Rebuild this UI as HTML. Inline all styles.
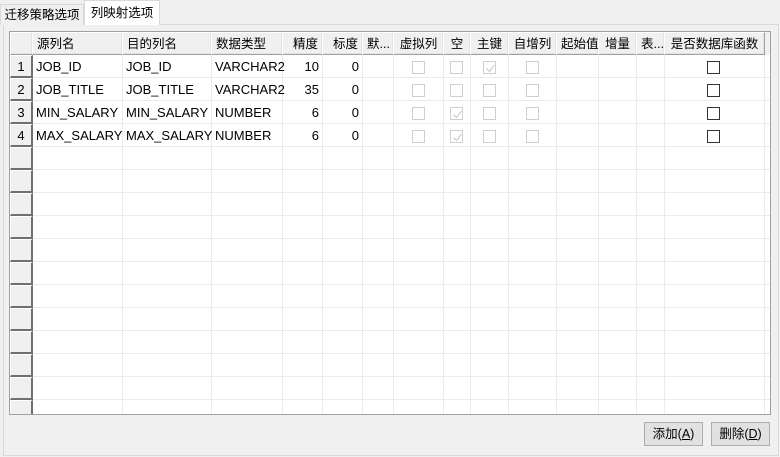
<!DOCTYPE html>
<html><head><meta charset="utf-8"><style>
*{margin:0;padding:0;box-sizing:border-box}
body{width:780px;height:457px;background:#f0f0f0;position:relative;overflow:hidden;font-family:"Liberation Sans","Noto Sans CJK SC",sans-serif;font-size:12.5px;color:#000}
.a{position:absolute}
.tab{position:absolute;font-size:12.5px;line-height:20px;text-align:center}
.panel{left:3px;top:24px;width:776px;height:432px;border:1px solid #d9d9d9;background:#f0f0f0}
.grid{left:9px;top:31px;width:762px;height:384px;border:1px solid #a0a0a0;background:#fff;overflow:hidden}
.hc{position:absolute;top:0;height:23px;background:#f0f0f0;border-top:1px solid #fff;border-left:1px solid #fff;border-right:1px solid #a0a0a0;border-bottom:1px solid #a0a0a0;box-shadow:inset -1px -1px 0 #e3e3e3;line-height:22px;padding-left:4px;white-space:nowrap;overflow:hidden}
.rh{position:absolute;left:0;width:23px;height:23px;background:#f0f0f0;border-top:1px solid #fff;border-left:1px solid #fff;border-right:2px solid #707070;border-bottom:2px solid #707070;text-align:center;line-height:22px;font-size:13px}
.vl{position:absolute;top:23px;bottom:0;width:1px;background:#ebebeb}
.t{position:absolute;line-height:24px;white-space:nowrap;font-size:13px}
.cb{position:absolute;width:13px;height:13px;border:1px solid #cfcfcf;background:#fff}
.cb.k{border-color:#333}
.cb svg{position:absolute;left:1px;top:1px}
.btn{position:absolute;top:422px;width:59px;height:24px;border:1px solid #adadad;background:#e1e1e1;text-align:center;line-height:22px;font-size:12.5px}
</style></head><body>
<div class="a panel"></div>
<div class="tab" style="left:0;top:4px;width:84px;height:21px;border:1px solid #d9d9d9;border-bottom:none;background:#f0f0f0;">迁移策略选项</div>
<div class="tab" style="left:84px;top:0;width:76px;height:25px;border:1px solid #d9d9d9;border-bottom:none;background:#fff;line-height:24px">列映射选项</div>
<div class="a grid">
<div style="position:absolute;left:0;right:0;top:23px;bottom:0;background:repeating-linear-gradient(to bottom,transparent 0,transparent 22px,#ebebeb 22px,#ebebeb 23px)"></div>
<div class="vl" style="left:112px"></div><div class="vl" style="left:201px"></div><div class="vl" style="left:272px"></div><div class="vl" style="left:312px"></div><div class="vl" style="left:352px"></div><div class="vl" style="left:383px"></div><div class="vl" style="left:433px"></div><div class="vl" style="left:460px"></div><div class="vl" style="left:498px"></div><div class="vl" style="left:546px"></div><div class="vl" style="left:588px"></div><div class="vl" style="left:626px"></div><div class="vl" style="left:654px"></div><div class="vl" style="left:754px"></div>
<div style="position:absolute;left:755px;top:0;width:6px;height:23px;background:#f0f0f0"></div>
<div class="hc" style="left:0;width:23px;border-right:1px solid #a0a0a0"></div>
<div class="hc" style="left:22px;width:91px">源列名</div>
<div class="hc" style="left:112px;width:90px">目的列名</div>
<div class="hc" style="left:201px;width:72px">数据类型</div>
<div class="hc" style="left:272px;width:41px;text-align:right;padding-right:4px">精度</div>
<div class="hc" style="left:312px;width:41px;text-align:right;padding-right:4px">标度</div>
<div class="hc" style="left:352px;width:32px">默...</div>
<div class="hc" style="left:383px;width:51px;text-align:center;padding:0">虚拟列</div>
<div class="hc" style="left:433px;width:28px;text-align:center;padding:0">空</div>
<div class="hc" style="left:460px;width:39px;text-align:center;padding:0">主键</div>
<div class="hc" style="left:498px;width:49px;text-align:center;padding:0">自增列</div>
<div class="hc" style="left:546px;width:43px">起始值</div>
<div class="hc" style="left:588px;width:39px;text-align:center;padding:0">增量</div>
<div class="hc" style="left:626px;width:29px">表...</div>
<div class="hc" style="left:654px;width:101px;text-align:center;padding:0">是否数据库函数</div>

<div class="rh" style="top:23px">1</div><div class="rh" style="top:46px">2</div><div class="rh" style="top:69px">3</div><div class="rh" style="top:92px">4</div>
<div class="rh" style="top:115px"></div><div class="rh" style="top:138px"></div><div class="rh" style="top:161px"></div><div class="rh" style="top:184px"></div><div class="rh" style="top:207px"></div><div class="rh" style="top:230px"></div><div class="rh" style="top:253px"></div><div class="rh" style="top:276px"></div><div class="rh" style="top:299px"></div><div class="rh" style="top:322px"></div><div class="rh" style="top:345px"></div><div class="rh" style="top:368px"></div>

<div class="t" style="left:26px;top:23px">JOB_ID</div><div class="t" style="left:116px;top:23px">JOB_ID</div><div class="t" style="left:205px;top:23px">VARCHAR2</div><div class="t" style="left:272px;top:23px;width:37px;text-align:right">10</div><div class="t" style="left:312px;top:23px;width:37px;text-align:right">0</div>
<div class="t" style="left:26px;top:46px">JOB_TITLE</div><div class="t" style="left:116px;top:46px">JOB_TITLE</div><div class="t" style="left:205px;top:46px">VARCHAR2</div><div class="t" style="left:272px;top:46px;width:37px;text-align:right">35</div><div class="t" style="left:312px;top:46px;width:37px;text-align:right">0</div>
<div class="t" style="left:26px;top:69px">MIN_SALARY</div><div class="t" style="left:116px;top:69px">MIN_SALARY</div><div class="t" style="left:205px;top:69px">NUMBER</div><div class="t" style="left:272px;top:69px;width:37px;text-align:right">6</div><div class="t" style="left:312px;top:69px;width:37px;text-align:right">0</div>
<div class="t" style="left:26px;top:92px">MAX_SALARY</div><div class="t" style="left:116px;top:92px">MAX_SALARY</div><div class="t" style="left:205px;top:92px">NUMBER</div><div class="t" style="left:272px;top:92px;width:37px;text-align:right">6</div><div class="t" style="left:312px;top:92px;width:37px;text-align:right">0</div>

<div class="cb" style="left:402px;top:29px"></div><div class="cb" style="left:440px;top:29px"></div><div class="cb" style="left:473px;top:29px"><svg width="11" height="11"><path d="M1.5 5.5 L4.5 8.5 L9.5 2" stroke="#c4c4c4" fill="none" stroke-width="1"/></svg></div><div class="cb" style="left:516px;top:29px"></div><div class="cb k" style="left:697px;top:29px"></div>
<div class="cb" style="left:402px;top:52px"></div><div class="cb" style="left:440px;top:52px"></div><div class="cb" style="left:473px;top:52px"></div><div class="cb" style="left:516px;top:52px"></div><div class="cb k" style="left:697px;top:52px"></div>
<div class="cb" style="left:402px;top:75px"></div><div class="cb" style="left:440px;top:75px"><svg width="11" height="11"><path d="M1.5 5.5 L4.5 8.5 L9.5 2" stroke="#c4c4c4" fill="none" stroke-width="1"/></svg></div><div class="cb" style="left:473px;top:75px"></div><div class="cb" style="left:516px;top:75px"></div><div class="cb k" style="left:697px;top:75px"></div>
<div class="cb" style="left:402px;top:98px"></div><div class="cb" style="left:440px;top:98px"><svg width="11" height="11"><path d="M1.5 5.5 L4.5 8.5 L9.5 2" stroke="#c4c4c4" fill="none" stroke-width="1"/></svg></div><div class="cb" style="left:473px;top:98px"></div><div class="cb" style="left:516px;top:98px"></div><div class="cb k" style="left:697px;top:98px"></div>
</div>
<div class="btn" style="left:644px">添加(<u>A</u>)</div>
<div class="btn" style="left:711px">删除(<u>D</u>)</div>
</body></html>
